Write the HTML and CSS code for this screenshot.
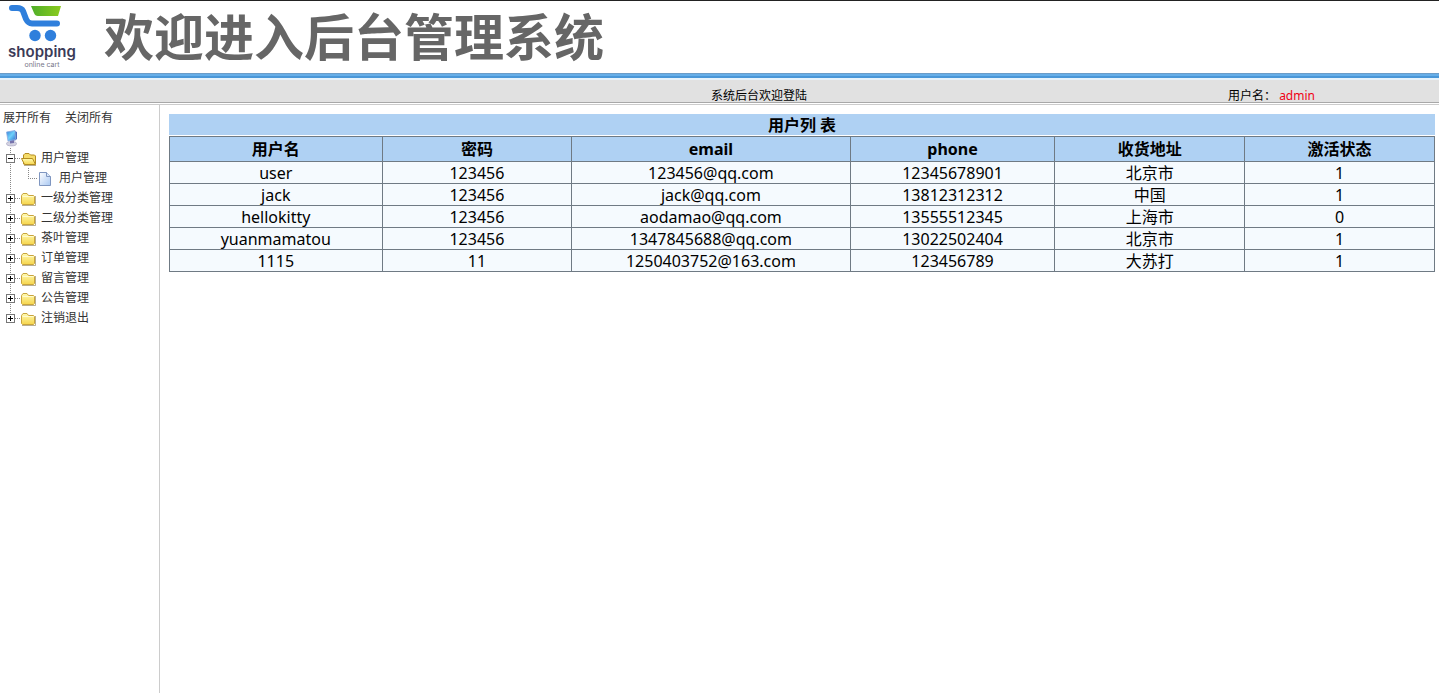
FILE: index.html
```html
<!DOCTYPE html>
<html lang="zh-CN">
<head>
  <meta charset="UTF-8" />
  <meta name="viewport" content="width=device-width, initial-scale=1.0"/>
  <title>欢迎进入后台管理系统</title>
  <link rel="stylesheet" href="styles.css">
</head>
<body>

  <!-- shared tree icons -->
  <svg class="defs" width="0" height="0" aria-hidden="true">
    <defs>
      <linearGradient id="gFolder" x1="0" y1="0" x2="0" y2="1">
        <stop offset="0" stop-color="#fffbb0"/>
        <stop offset="1" stop-color="#f6d54c"/>
      </linearGradient>
      <linearGradient id="gPage" x1="0" y1="0" x2="1" y2="1">
        <stop offset="0" stop-color="#ffffff"/>
        <stop offset="1" stop-color="#a9c8f2"/>
      </linearGradient>
      <linearGradient id="gScreen" x1="0" y1="0" x2="1" y2="1">
        <stop offset="0" stop-color="#2f7fd8"/>
        <stop offset="0.5" stop-color="#6fd0fa"/>
        <stop offset="1" stop-color="#2a6fd0"/>
      </linearGradient>
      <linearGradient id="gBasket" x1="0" y1="0" x2="1" y2="0">
        <stop offset="0" stop-color="#4fae2a"/>
        <stop offset="1" stop-color="#8ccb1e"/>
      </linearGradient>
    </defs>
    <symbol id="plus" viewBox="0 0 18 20">
      <path d="M8.500 0V20M13 10.500H18" stroke="#888" stroke-dasharray="1 1" fill="none"/>
      <rect x="4.500" y="6.500" width="8" height="8" fill="#fff" stroke="#777"/>
      <path d="M6 10.500H11M8.500 8V13" stroke="#000"/>
    </symbol>
    <symbol id="plusEnd" viewBox="0 0 18 20">
      <path d="M8.500 0V7M13 10.500H18" stroke="#888" stroke-dasharray="1 1" fill="none"/>
      <rect x="4.500" y="6.500" width="8" height="8" fill="#fff" stroke="#777"/>
      <path d="M6 10.500H11M8.500 8V13" stroke="#000"/>
    </symbol>
    <symbol id="minus" viewBox="0 0 18 20">
      <path d="M8.500 0V20M13 10.500H18" stroke="#888" stroke-dasharray="1 1" fill="none"/>
      <rect x="4.500" y="6.500" width="8" height="8" fill="#fff" stroke="#777"/>
      <path d="M6 10.500H11" stroke="#000"/>
    </symbol>
    <symbol id="line" viewBox="0 0 18 20">
      <path d="M8.500 0V20" stroke="#888" stroke-dasharray="1 1"/>
    </symbol>
    <symbol id="join" viewBox="0 0 18 20">
      <path d="M8.500 0V10.500M8 10.500H18" stroke="#888" stroke-dasharray="1 1" fill="none"/>
    </symbol>
    <symbol id="folder" viewBox="0 0 18 20">
      <path d="M2 17.500H15.500V8" fill="none" stroke="#8a7a4a" opacity="0.6"/>
      <path d="M1.500 15.500V7.500L3 5.500H7L8.500 7.500H13.500L14.500 8.500V15.500L13.500 16.500H2.500Z" fill="url(#gFolder)" stroke="#c9a53c"/>
      <path d="M2.500 8.500H13.500" stroke="#fffbd0"/>
    </symbol>
    <symbol id="folderOpen" viewBox="0 0 18 20">
      <path d="M3.500 16V7L5 5.500H9L10.500 7H14.500L15.500 8V16Z" fill="#f5dc6a" stroke="#b38c22"/>
      <path d="M1.500 10.500H12.500L15.500 16.500H4.500Z" fill="url(#gFolder)" stroke="#b38c22"/>
      <path d="M4 17.500H16" stroke="#8a7a4a" opacity="0.6"/>
    </symbol>
    <symbol id="page" viewBox="0 0 18 20">
      <path d="M1.500 4.500H8.500L12.500 8.500V17.500H1.500Z" fill="url(#gPage)" stroke="#7f96c0"/>
      <path d="M8.500 4.500V8.500H12.500" fill="#dce8fa" stroke="#7f96c0"/>
    </symbol>
    <symbol id="computer" viewBox="0 0 18 20">
      <ellipse cx="9.500" cy="15.700" rx="5" ry="2.200" fill="#d4d3e2" stroke="#9d9bb8" stroke-width="0.600"/>
      <path d="M8 12L12 11V15L8 15.500Z" fill="#7773ab"/>
      <path d="M12 2.500L15 4V11L12.500 13Z" fill="#4c6fb8"/>
      <path d="M4.500 4L13 2.500L13.500 11.500L6 13Z" fill="url(#gScreen)" stroke="#8aaae2" stroke-width="0.800"/>
    </symbol>
  </svg>

  <header class="header">
    <svg class="logo" viewBox="0 0 80 72" role="img" aria-label="shopping online cart">
      <path d="M12 7H17C20 7 22 8 23 10L26 18C27.500 21 28.500 22.500 32 22.500H57" fill="none" stroke="#2f7fdc" stroke-width="6" stroke-linecap="round" stroke-linejoin="round"/>
      <path d="M31 5H61L58 15H38Q35 15 34 12Z" fill="url(#gBasket)"/>
      <circle cx="35" cy="34.500" r="5.700" fill="#2f7fdc"/>
      <circle cx="50.500" cy="34.500" r="5.700" fill="#2f7fdc"/>
      <text class="logo-name" x="42" y="56" text-anchor="middle">shopping</text>
      <text class="logo-sub" x="42" y="66" text-anchor="middle">online cart</text>
    </svg>
    <h1>欢迎进入后台管理系统</h1>
  </header>

  <div class="topbar">
    <span class="welcome">系统后台欢迎登陆</span>
    <span class="user">用户名： <b>admin</b></span>
  </div>

  <div class="main">
    <nav class="sidebar">
      <div class="tools"><a href="#">展开所有</a><a href="#">关闭所有</a></div>
      <ul class="tree">
        <li><svg><use href="#computer"/></svg></li>
        <li><svg><use href="#minus"/></svg><svg><use href="#folderOpen"/></svg><a href="#">用户管理</a></li>
        <li><svg><use href="#line"/></svg><svg><use href="#join"/></svg><svg><use href="#page"/></svg><a href="#">用户管理</a></li>
        <li><svg><use href="#plus"/></svg><svg><use href="#folder"/></svg><a href="#">一级分类管理</a></li>
        <li><svg><use href="#plus"/></svg><svg><use href="#folder"/></svg><a href="#">二级分类管理</a></li>
        <li><svg><use href="#plus"/></svg><svg><use href="#folder"/></svg><a href="#">茶叶管理</a></li>
        <li><svg><use href="#plus"/></svg><svg><use href="#folder"/></svg><a href="#">订单管理</a></li>
        <li><svg><use href="#plus"/></svg><svg><use href="#folder"/></svg><a href="#">留言管理</a></li>
        <li><svg><use href="#plus"/></svg><svg><use href="#folder"/></svg><a href="#">公告管理</a></li>
        <li><svg><use href="#plusEnd"/></svg><svg><use href="#folder"/></svg><a href="#">注销退出</a></li>
      </ul>
    </nav>

    <main class="content">
      <table class="list">
        <caption>用户列 表</caption>
        <colgroup>
          <col class="c-name"><col class="c-pwd"><col class="c-email"><col class="c-phone"><col class="c-addr"><col class="c-state">
        </colgroup>
        <thead>
          <tr><th>用户名</th><th>密码</th><th>email</th><th>phone</th><th>收货地址</th><th>激活状态</th></tr>
        </thead>
        <tbody>
          <tr><td>user</td><td>123456</td><td>123456@qq.com</td><td>12345678901</td><td>北京市</td><td>1</td></tr>
          <tr><td>jack</td><td>123456</td><td>jack@qq.com</td><td>13812312312</td><td>中国</td><td>1</td></tr>
          <tr><td>hellokitty</td><td>123456</td><td>aodamao@qq.com</td><td>13555512345</td><td>上海市</td><td>0</td></tr>
          <tr><td>yuanmamatou</td><td>123456</td><td>1347845688@qq.com</td><td>13022502404</td><td>北京市</td><td>1</td></tr>
          <tr><td>1115</td><td>11</td><td>1250403752@163.com</td><td>123456789</td><td>大苏打</td><td>1</td></tr>
        </tbody>
      </table>
    </main>
  </div>

</body>
</html>
```
FILE: styles.css
```css
* {
  box-sizing: border-box;
}

body {
  margin: 0;
  min-height: 100vh;
  display: flex;
  flex-direction: column;
  background: #fff;
  color: #000;
  font-family: "Noto Sans", "Noto Sans CJK SC", sans-serif;
  font-size: 12px;
}

a {
  color: #333;
  text-decoration: none;
}

.defs {
  position: absolute;
}

/* header */
.header {
  display: flex;
  align-items: center;
  gap: 24px;
  height: 73px;
  border-top: 1px solid #222;
}

.logo {
  width: 80px;
  height: 72px;
  flex: none;
}

.logo-name {
  font: 600 15px Inter, sans-serif;
  fill: #3b3b58;
}

.logo-sub {
  font: 7px Inter, sans-serif;
  fill: #77778a;
}

.header h1 {
  margin: 0;
  font-size: 50px;
  line-height: 70px;
  font-weight: bold;
  color: #666;
  white-space: nowrap;
}

.topbar {
  display: grid;
  grid-template-columns: 290px 1fr 211px;
  height: 32px;
  padding-top: 7px;
  line-height: 32px;
  background: linear-gradient(#6b9cc8 0 1px, #66aee8 1px 3px, #4a97d8 3px 5px, #e6f3fc 5px 7px, #e1e1e1 7px 29px, #a8a8a8 29px 30px, #fff 30px 31px, #ccc 31px);
}

.welcome {
  grid-column: 2;
  text-align: center;
}

.user b {
  font-weight: normal;
  color: #f00014;
}

/* layout */
.main {
  flex: 1;
  display: flex;
}

.sidebar {
  width: 160px;
  flex: none;
  padding: 3px 2px;
  border-right: 1px solid #ccc;
}

.tools {
  display: flex;
  gap: 14px;
  padding-left: 1px;
  line-height: 20px;
}

.tree {
  margin: 0;
  padding: 0;
  list-style: none;
}

.tree li {
  display: flex;
  height: 20px;
  line-height: 20px;
}

.tree svg {
  width: 18px;
  height: 20px;
  flex: none;
}

.tree a {
  padding-left: 3px;
}

.content {
  flex: 1;
  padding: 9px 4px 9px 9px;
}

/* user table */
.list {
  width: 100%;
  table-layout: fixed;
  border-collapse: collapse;
  font-size: 16px;
  line-height: 19px;
  text-align: center;
}

.list caption {
  margin-bottom: 1px;
  padding-top: 2px;
  background: #afd1f3;
  font-weight: bold;
}

.list th,
.list td {
  padding: 0;
  border: 1px solid #6f7a84;
}

.list th {
  height: 25px;
  background: #afd1f3;
}

.list td {
  height: 22px;
  padding-top: 2px;
  background: #f5fafe;
}

.c-name { width: 16.8%; }
.c-pwd { width: 15%; }
.c-email { width: 22%; }
.c-phone { width: 16.2%; }
.c-addr { width: 15%; }
.c-state { width: 15%; }
```
